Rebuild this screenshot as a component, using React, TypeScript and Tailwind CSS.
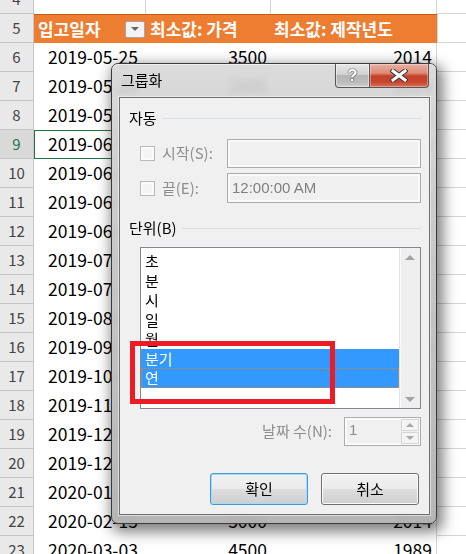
import { Fragment } from 'react';

const FONT = "font-['Malgun_Gothic','Noto_Sans_CJK_KR','Noto_Sans',sans-serif]";

const DATA_ROWS: [number, string, string, string][] = [
  [6, '2019-05-25', '3500', '2014'],
  [7, '2019-05-28', '2000', '2014'],
  [8, '2019-05-31', '3000', '2016'],
  [9, '2019-06-03', '4500', '2014'],
  [10, '2019-06-08', '3500', '2015'],
  [11, '2019-06-12', '5000', '2018'],
  [12, '2019-06-19', '2500', '2017'],
  [13, '2019-07-02', '3500', '2013'],
  [14, '2019-07-19', '4000', '2012'],
  [15, '2019-08-05', '3000', '2014'],
  [16, '2019-09-10', '5500', '2019'],
  [17, '2019-10-14', '4000', '2016'],
  [18, '2019-11-05', '3500', '2015'],
  [19, '2019-12-02', '2500', '2014'],
  [20, '2019-12-20', '6000', '2018'],
  [21, '2020-01-14', '3500', '2017'],
  [22, '2020-02-15', '5000', '2014'],
  [23, '2020-03-03', '4500', '1989'],
];

const UNITS = ['초', '분', '시', '일', '월', '분기', '연'];

function RowHead({ n, active }: { n: number; active?: boolean }) {
  return (
    <div
      className={`w-[34px] shrink-0 flex items-center justify-center border-r border-b border-[#c6c6c6] text-[15px] ${
        active ? 'bg-[#d9d9d9] text-[#217346]' : 'bg-[#e9e9e9] text-[#444]'
      }`}
    >
      {n}
    </div>
  );
}

function Sheet() {
  return (
    <div className="-mt-[15px]">
      {/* row 4 */}
      <div className="flex h-[29px]">
        <RowHead n={4} />
        <div className="w-[112px] shrink-0 border-r border-[#d4d4d4]" />
        <div className="w-[125px] shrink-0 border-r border-[#d4d4d4]" />
        <div className="w-[166px] shrink-0 border-r border-[#d4d4d4]" />
        <div className="flex-1 border-b border-[#d4d4d4]" />
      </div>
      {/* row 5: pivot header */}
      <div className="flex h-[29px]">
        <RowHead n={5} />
        <div className="w-[403px] shrink-0 flex bg-[#ed7d31] shadow-[inset_0_1px_0_#c55a11] text-white font-bold text-[17px] leading-none">
          <div className="w-[112px] shrink-0 flex items-center pl-[4px] pr-[1px]">
            <span>입고일자</span>
            <span className="ml-auto w-[20px] h-[17px] mt-[1px] flex items-center justify-center border border-[#a5a5a5] bg-[#f3f3f3] rounded-[2px]">
              <span className="w-0 h-0 border-l-[4px] border-r-[4px] border-t-[4px] border-l-transparent border-r-transparent border-t-[#666]" />
            </span>
          </div>
          <div className="w-[125px] shrink-0 flex items-center pl-[4px]">최소값: 가격</div>
          <div className="w-[166px] shrink-0 flex items-center pl-[3px]">최소값: 제작년도</div>
        </div>
        <div className="flex-1 border-b border-l border-[#d4d4d4]" />
      </div>
      {DATA_ROWS.map(([n, date, price, year]) => (
        <div key={n} className="flex h-[29px] text-[17.5px] text-black">
          <RowHead n={n} active={n === 9} />
          <div className="relative w-[112px] shrink-0 flex items-center pl-[14px] overflow-hidden whitespace-nowrap">
            {date}
            {n === 9 && (
              <div className="absolute -left-[1px] -top-[1px] bottom-[-1px] right-0 border-2 border-[#217346]" />
            )}
          </div>
          <div className="w-[125px] shrink-0 flex items-center justify-end pr-[4px]">{price}</div>
          <div className="w-[166px] shrink-0 flex items-center justify-end pr-[4px] border-r border-[#d4d4d4]">
            {year}
          </div>
          <div className="flex-1 border-b border-[#d4d4d4]" />
        </div>
      ))}
    </div>
  );
}

function CheckBox() {
  return (
    <span className="block w-[15px] h-[15px] shrink-0 border border-[#b9b9b9] bg-[#f4f4f4] shadow-[inset_0_0_0_2px_#fbfbfb]" />
  );
}

function GroupLabel({ text }: { text: string }) {
  return (
    <div className="flex items-center h-[18px] text-[15px] text-black">
      <span>{text}</span>
      <span className="flex-1 ml-[5px] h-px bg-[#d5dfe5]" />
    </div>
  );
}

function DisabledInput({ value }: { value?: string }) {
  return (
    <div className="w-[194px] h-full border border-[#adadad] bg-[#f0f0f0] shadow-[inset_0_0_0_2px_#fafafa] flex items-center pl-[4px] text-[15px] text-[#7f7f7f] font-['Liberation_Sans',sans-serif]">
      {value}
    </div>
  );
}

function TitleButtons() {
  return (
    <div className="absolute right-[7px] top-0 flex h-[24px]">
      <div className="w-[35px] h-full flex items-center justify-center border border-t-0 border-[#565656] rounded-bl-[4px] bg-[linear-gradient(to_bottom,#e6e6e6_0%,#d2d2d2_45%,#b6b6b6_50%,#bcbcbc_80%,#cfcfcf_100%)] shadow-[inset_0_0_0_1px_rgba(255,255,255,0.45)]">
        <span className="text-white font-bold text-[17px] leading-none font-['Liberation_Sans',sans-serif] [text-shadow:0_0_1px_#3c3c3c,0_0_1px_#3c3c3c,0_0_1px_#3c3c3c]">
          ?
        </span>
      </div>
      <div className="w-[59px] h-full flex items-center justify-center border border-t-0 border-l-0 border-[#565656] rounded-br-[4px] bg-[linear-gradient(to_bottom,#eab0a2_0%,#de8a76_40%,#c3422a_52%,#c8452c_78%,#d87058_100%)] shadow-[inset_0_0_0_1px_rgba(255,255,255,0.35)]">
        <svg width="18" height="13" viewBox="0 0 18 13">
          <path d="M3 2 L15 11 M15 2 L3 11" stroke="#3a3a3a" strokeWidth="5" strokeLinecap="square" />
          <path d="M3 2 L15 11 M15 2 L3 11" stroke="#ffffff" strokeWidth="3" strokeLinecap="square" />
        </svg>
      </div>
    </div>
  );
}

function ListBox() {
  return (
    <div className="ml-[11px] h-[162px] border border-[#828790] bg-white flex">
      <div className="flex-1 pt-[3px] text-[15px] text-black">
        {UNITS.map((u, i) => {
          const selected = i >= 5;
          return (
            <div
              key={u}
              className={`h-[19.5px] flex items-center pl-[4px] leading-none ${
                selected ? 'bg-[#3399ff] text-white' : ''
              } ${i === 6 ? 'border border-dotted border-[#d9843a]' : ''}`}
            >
              <span className={i === 6 ? '-ml-px' : ''}>{u}</span>
            </div>
          );
        })}
      </div>
      <div className="w-[21px] bg-[#efefef] border-l border-[#e4e4e4] flex flex-col justify-between shadow-[inset_1px_0_0_#fafafa]">
        <div className="h-[18px] flex items-center justify-center">
          <span className="w-0 h-0 border-l-[5px] border-r-[5px] border-b-[5px] border-l-transparent border-r-transparent border-b-[#a3a3a3]" />
        </div>
        <div className="h-[18px] flex items-center justify-center">
          <span className="w-0 h-0 border-l-[5px] border-r-[5px] border-t-[5px] border-l-transparent border-r-transparent border-t-[#a3a3a3]" />
        </div>
      </div>
    </div>
  );
}

function SpinBox() {
  return (
    <div className="w-[77px] h-full border border-[#adadad] bg-[#f0f0f0] shadow-[inset_0_0_0_2px_#fafafa] flex">
      <div className="flex-1 pl-[4px] pt-[3px] text-[15px] leading-[18px] text-[#8d8d8d] font-['Liberation_Sans',sans-serif]">
        1
      </div>
      <div className="w-[20px] flex flex-col p-[1px] gap-[1px]">
        <div className="flex-1 border border-[#d6d6d6] bg-[#f4f4f4] flex items-center justify-center">
          <span className="w-0 h-0 border-l-[4px] border-r-[4px] border-b-[4px] border-l-transparent border-r-transparent border-b-[#a8a8a8]" />
        </div>
        <div className="flex-1 border border-[#d6d6d6] bg-[#f4f4f4] flex items-center justify-center">
          <span className="w-0 h-0 border-l-[4px] border-r-[4px] border-t-[4px] border-l-transparent border-r-transparent border-t-[#a8a8a8]" />
        </div>
      </div>
    </div>
  );
}

function Button({ label, primary }: { label: string; primary?: boolean }) {
  return (
    <div
      className={`w-[98px] h-full rounded-[3px] border flex items-center justify-center text-[15px] text-black bg-[linear-gradient(to_bottom,#f2f2f2_0%,#ebebeb_48%,#dddddd_52%,#cfcfcf_100%)] ${
        primary
          ? 'border-[#3c9bd6] shadow-[inset_0_0_0_1px_#a6dcf7]'
          : 'border-[#707070] shadow-[inset_0_0_0_1px_#fcfcfc]'
      }`}
    >
      {label}
    </div>
  );
}

function GroupDialog() {
  return (
    <div className="absolute left-[111px] top-[63px] w-[326px] h-[461px] rounded-[7px] border border-[#3a3a3a] bg-[linear-gradient(to_bottom,rgba(214,214,214,0.88),rgba(196,196,196,0.92)_40%,rgba(178,178,178,0.95))] backdrop-blur-[3px] shadow-[3px_5px_14px_3px_rgba(0,0,0,0.5)] flex flex-col">
      <div className="relative h-[33px] shrink-0 rounded-t-[6px] shadow-[inset_0_1px_0_rgba(255,255,255,0.6)]">
        <span className="absolute left-[9px] top-[7px] text-[15px] leading-[18px] text-black">그룹화</span>
        <TitleButtons />
      </div>
      <div className="mx-[6px] ml-[7px] border border-[#6f6f6f] bg-[#f0f0f0] flex flex-col pl-[9px] pr-[8px] pt-[11px] pb-[9px] shadow-[0_0_0_1px_rgba(255,255,255,0.5)]">
        <GroupLabel text="자동" />
        <div className="mt-[12px] h-[29px] flex items-center">
          <span className="ml-[11px]"><CheckBox /></span>
          <span className="ml-[7px] text-[15px] text-[#8e8e8e]">시작(S):</span>
          <div className="ml-auto h-full"><DisabledInput /></div>
        </div>
        <div className="mt-[5px] h-[30px] flex items-center">
          <span className="ml-[11px]"><CheckBox /></span>
          <span className="ml-[7px] text-[15px] text-[#8e8e8e]">끝(E):</span>
          <div className="ml-auto h-full"><DisabledInput value="12:00:00 AM" /></div>
        </div>
        <div className="mt-[16px]">
          <GroupLabel text="단위(B)" />
        </div>
        <div className="mt-[10px]">
          <ListBox />
        </div>
        <div className="mt-[8px] h-[29px] flex items-center justify-end">
          <span className="mr-[12px] text-[15px] text-[#8e8e8e]">날짜 수(N):</span>
          <SpinBox />
        </div>
        <div className="mt-[27px] h-[32px] flex justify-end gap-[13px] pr-[2px]">
          <Button label="확인" primary />
          <Button label="취소" />
        </div>
      </div>
    </div>
  );
}

export default function App() {
  return (
    <div className={`relative w-[466px] h-[554px] overflow-hidden bg-white ${FONT}`}>
      <Sheet />
      <GroupDialog />
      <Fragment>
        <div className="absolute left-[130px] top-[341px] w-[205px] h-[63px] border-[5px] border-[#ed1c24]" />
      </Fragment>
    </div>
  );
}
